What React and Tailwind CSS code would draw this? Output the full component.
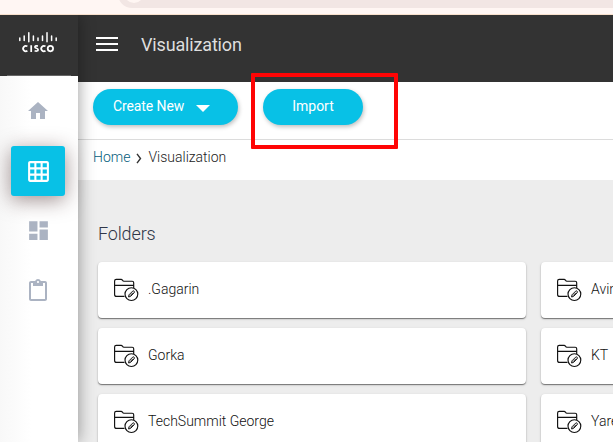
import { MdHome, MdGridOn, MdDashboard, MdContentPaste } from "react-icons/md";

function CiscoLogo() {
  const bars = [
    [19.8, 38, 40.4], [24.2, 36, 40.4], [28.8, 32.7, 41.8], [33.4, 36, 40.4], [38, 38, 40.4],
    [42.5, 36, 40.4], [47, 32.7, 41.8], [51.6, 36, 40.4], [56.2, 38, 40.4],
  ];
  return (
    <svg width="78" height="60" viewBox="0 15 78 60" fill="none" stroke="#fff" strokeLinecap="round">
      {bars.map(([x, a, b]) => (
        <path key={x} d={`M${x} ${a}V${b}`} strokeWidth="1.5" />
      ))}
      <g strokeWidth="1.75" strokeLinecap="butt">
        <path d="M27.4 46.4a2.7 2.7 0 1 0 0 4.4M31.2 45.2V52M37.9 46.1c-1.3-.4-3-.3-3 .9 0 1.6 3.2.9 3.2 2.7 0 1.5-1.9 1.6-3.5 1M45.5 46.4a2.7 2.7 0 1 0 0 4.4" />
        <circle cx="50.4" cy="48.6" r="2.7" />
      </g>
    </svg>
  );
}

function FolderIcon() {
  return (
    <svg className="shrink-0" width="25" height="24" viewBox="0 0 25 24" fill="none" stroke="#111" strokeWidth="1.15">
      <path d="M10.5 18.4H2.6Q.6 18.4 .6 16.4V3Q.6 1.3 2.3 1.3H7Q8 1.3 8.5 2.2T10 3.2H18.2Q19.7 3.2 19.7 4.8V10M.6 7.4H19.7" />
      <circle cx="17.4" cy="16.1" r="6.4" />
      <path d="M14.6 19 15 16.8 18.7 13.1Q19.4 12.5 20.1 13.2T20.2 14.7L16.6 18.4ZM16 17.7 19 14.7" strokeWidth="1" />
    </svg>
  );
}

function Folder({ name }) {
  return (
    <div className="flex h-14 items-center rounded bg-white pl-[15.5px] pb-px text-[14px] font-light text-[#111] shadow-[0_1px_1px_rgba(0,0,0,0.45),0_1px_3px_rgba(0,0,0,0.15)]">
      <FolderIcon />
      <span className="ml-[9.5px] whitespace-nowrap">{name}</span>
    </div>
  );
}

const folders = [".Gagarin", "Avin", "Gorka", "KT", "TechSummit George", "Yare"];

export default function App() {
  return (
    <div className="relative flex h-[442px] w-[613px] flex-col overflow-hidden bg-white font-['Roboto',sans-serif]">
      <div className="h-[15px] shrink-0 overflow-hidden border-b border-[#f8e0cc] bg-[#fff6f3]">
        <div className="-mt-5 ml-[118px] box-content h-6 w-[560px] rounded-full bg-[#f2e6e4] pl-0.5 pt-1">
          <div className="ml-1 -mt-px size-5 rounded-full bg-[#fff6f3]" />
        </div>
      </div>
      <div className="flex min-h-0 grow">
        <aside className="z-10 flex w-[78px] shrink-0 flex-col items-center bg-linear-to-r from-[#f8f8f8] to-white to-40% shadow-[0_0_16px_rgba(0,0,0,0.4)] [clip-path:inset(0_-30px_0_0)]">
          <div className="flex h-[61px] w-full shrink-0 flex-col items-center bg-[#333]">
            <CiscoLogo />
            <div className="h-px w-16 bg-[#666]" />
          </div>
          <nav className="mr-0.5 flex flex-col items-center text-[#abb3c2]">
            <MdHome className="mt-[23px] size-6" />
            <div className="mt-[23px] flex h-[50px] w-[54px] items-center justify-center rounded-[3px] bg-[#08c1e6] text-white shadow-[0_4px_20px_rgba(60,30,30,0.5)]">
              <MdGridOn className="size-[25px]" />
            </div>
            <MdDashboard className="mt-[22px] size-[25px]" />
            <MdContentPaste className="mt-9 size-6" />
          </nav>
        </aside>
        <main className="flex min-w-0 grow flex-col">
          <header className="flex h-[67px] shrink-0 items-start bg-[#333] pl-[18px] pt-[21px]">
            <div className="flex w-[22px] flex-col gap-1 pt-px">
              <div className="h-0.5 bg-white" />
              <div className="h-0.5 bg-white" />
              <div className="h-0.5 bg-white" />
            </div>
            <h1 className="ml-[23px] -mt-[5px] text-[18px] leading-7 tracking-[-0.16px] text-[#dedede]">Visualization</h1>
          </header>
          <div className="flex h-[58px] shrink-0 items-start gap-[25px] border-b border-[#dcdcdc] pl-[15px] pt-[7px] text-[14px] text-white">
            <button className="flex h-9 w-[145px] items-center rounded-full bg-[#08c1e6] pl-5 pb-px tracking-[-0.1px] shadow-[1px_2px_4px_rgba(0,0,0,0.25)]">
              Create New
              <svg className="ml-3 mt-[3px]" width="14" height="7" viewBox="0 0 14 7" fill="#fff"><path d="M0 0H14L7 7Z" /></svg>
            </button>
            <button className="flex h-9 w-[100px] items-center justify-center rounded-full bg-[#08c1e6] pb-px shadow-[1px_2px_4px_rgba(0,0,0,0.25)]">Import</button>
          </div>
          <div className="flex h-10 shrink-0 items-center pl-[15px] pb-[6px] text-[14px] font-light">
            <span className="text-[#045d7c]">Home</span>
            <svg className="ml-[6px] mt-0.5" width="6" height="11" viewBox="0 0 6 11" fill="none" stroke="#333" strokeWidth="1.4"><path d="M1 .8 4.5 5.5 1 10.2" /></svg>
            <span className="ml-[6px] text-[#222]">Visualization</span>
          </div>
          <section className="grow bg-[#ededed] pl-5">
            <h2 className="h-[82px] pt-10 text-[18px] font-light leading-7 tracking-[-0.15px] text-[#303648]">Folders</h2>
            <div className="grid w-[871px] grid-cols-2 gap-x-[15px] gap-y-[10px]">
              {folders.map((name) => <Folder key={name} name={name} />)}
            </div>
          </section>
        </main>
      </div>
      <div className="absolute left-[251px] top-[73px] z-20 h-[76px] w-[147px] rounded-[1px] border-4 border-[#ff0505]" />
    </div>
  );
}
